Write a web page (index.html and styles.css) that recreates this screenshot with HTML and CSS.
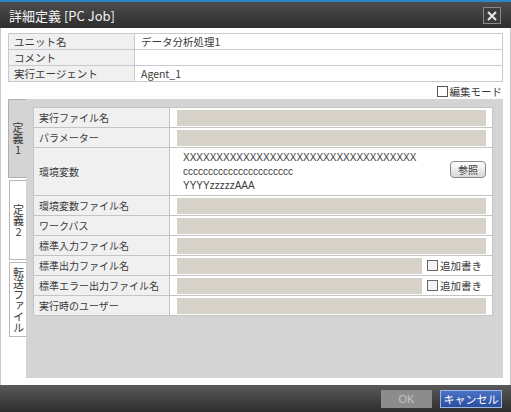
FILE: index.html
```html
<!DOCTYPE html>
<html lang="ja">
<head>
<meta charset="utf-8">
<link rel="stylesheet" href="styles.css">
</head>
<body>
<div class="dialog">
  <div class="titlebar">
    <span class="title">詳細定義 [PC Job]</span>
    <span class="close"><svg width="10" height="10" viewBox="0 0 10 10"><path d="M1 1L9 9M9 1L1 9" stroke="#e8e8e8" stroke-width="2"/></svg></span>
  </div>
  <div class="content">
    <table class="info">
      <tr><td class="lbl">ユニット名</td><td class="val">データ分析処理1</td></tr>
      <tr><td class="lbl">コメント</td><td class="val"></td></tr>
      <tr><td class="lbl">実行エージェント</td><td class="val">Agent_1</td></tr>
    </table>
    <div class="editmode"><span class="cb"></span>編集モード</div>
    <div class="tabarea">
      <div class="tablist">
        <div class="tab tab1 active"><span class="vt">定義1</span></div>
        <div class="tab tab2"><span class="vt">定義2</span></div>
        <div class="tab tab3"><span class="vt">転送ファイル</span></div>
      </div>
      <div class="panel">
        <table class="defs">
          <tr><td class="lbl">実行ファイル名</td><td class="val"><div class="inp"></div></td></tr>
          <tr><td class="lbl">パラメーター</td><td class="val"><div class="inp"></div></td></tr>
          <tr class="env"><td class="lbl">環境変数</td><td class="val">
            <div class="envrow">
              <div class="envtext">XXXXXXXXXXXXXXXXXXXXXXXXXXXXXXXXXXX<br>cccccccccccccccccccccc<br>YYYYzzzzzAAA</div>
              <span class="btn">参照</span>
            </div>
          </td></tr>
          <tr><td class="lbl">環境変数ファイル名</td><td class="val"><div class="inp"></div></td></tr>
          <tr><td class="lbl">ワークパス</td><td class="val"><div class="inp"></div></td></tr>
          <tr><td class="lbl">標準入力ファイル名</td><td class="val"><div class="inp"></div></td></tr>
          <tr><td class="lbl">標準出力ファイル名</td><td class="val"><div class="inprow"><div class="inp short"></div><span class="cb"></span>追加書き</div></td></tr>
          <tr><td class="lbl">標準エラー出力ファイル名</td><td class="val"><div class="inprow"><div class="inp short"></div><span class="cb"></span>追加書き</div></td></tr>
          <tr><td class="lbl">実行時のユーザー</td><td class="val"><div class="inp"></div></td></tr>
        </table>
      </div>
    </div>
  </div>
  <div class="footer">
    <span class="fbtn ok">OK</span>
    <span class="fbtn cancel">キャンセル</span>
  </div>
</div>
</body>
</html>
```

FILE: styles.css
```css
html, body {
  margin: 0;
  padding: 0;
}
body {
  width: 511px;
  height: 412px;
  overflow: hidden;
  font-family: "Noto Sans CJK JP", "Noto Sans", sans-serif;
  font-size: 10px;
  color: #3a3a3a;
  background: #fff;
}
.dialog {
  width: 511px;
  height: 412px;
  display: flex;
  flex-direction: column;
}
.titlebar {
  box-sizing: border-box;
  height: 28px;
  border-top: 2px solid #2a86c8;
  background: linear-gradient(#4d4d4d, #2e2e2e);
  display: flex;
  align-items: center;
  justify-content: space-between;
  padding: 0 10px 0 9px;
}
.title {
  color: #f4f4f4;
  font-size: 13px;
  line-height: 1;
}
.close {
  box-sizing: border-box;
  width: 18px;
  height: 17px;
  border: 1px solid #8a8a8a;
  background: #3c3c3c;
  display: flex;
  align-items: center;
  justify-content: center;
  margin-top: 1px;
}
.content {
  flex: 1;
  box-sizing: border-box;
  border-left: 1px solid #c8c8c8;
  border-right: 1px solid #c8c8c8;
  padding: 5px 7px 7px 7px;
  display: flex;
  flex-direction: column;
}
table {
  border-collapse: collapse;
}
td {
  padding: 0;
}
.info {
  width: 495px;
}
.info td {
  border: 1px solid #c8c8d0;
  height: 15px;
  line-height: 14px;
  font-size: 10.5px;
}
.info .lbl {
  width: 120px;
  padding-left: 5px;
  background: #f0f0f0;
}
.info .val {
  padding-left: 6px;
  background: #fff;
}
.editmode {
  display: flex;
  justify-content: flex-end;
  align-items: center;
  height: 14px;
  margin-top: 2px;
  padding-right: 1px;
  font-size: 10.5px;
}
.cb {
  box-sizing: border-box;
  display: inline-block;
  width: 11px;
  height: 11px;
  border: 1px solid #555;
  background: #fff;
  margin-right: 2px;
}
.tabarea {
  display: flex;
  height: 279px;
  margin-top: 1px;
}
.tablist {
  width: 18px;
  display: flex;
  flex-direction: column;
  gap: 2px;
}
.tab {
  box-sizing: border-box;
  display: flex;
  justify-content: center;
  align-items: center;
  background: #fff;
  border: 1px solid #b8b8b8;
  border-right: none;
  margin-left: 1px;
}
.tab.active {
  background: #d4d4d4;
  border-color: #b0b0b0;
  margin-left: 0;
}
.tab1 { height: 79px; }
.tab2 { height: 80px; }
.tab3 { height: 75px; }
.vt {
  writing-mode: vertical-rl;
  text-orientation: upright;
  font-size: 11px;
  line-height: 1;
}
.panel {
  flex: 1;
  background: #d4d4d4;
  padding: 8px 8px 0 7px;
}
.defs {
  width: 460px;
  background: #fff;
}
.defs td {
  border: 1px solid #c4c4c4;
  height: 19px;
}
.defs .lbl {
  width: 130px;
  padding-left: 5px;
  background: #f0f0f0;
  font-size: 10px;
}
.defs .val {
  padding: 0 6px 0 7px;
  font-size: 10.5px;
}
.inp {
  height: 16px;
  background: #d6d2ca;
}
.inprow {
  display: flex;
  align-items: center;
}
.inp.short {
  width: 245px;
  margin-right: 5px;
}
.inprow .cb {
  border-color: #666;
  background: #f4f4f4;
}
.defs .env td {
  height: 47px;
}
.envrow {
  display: flex;
  align-items: center;
  justify-content: space-between;
  padding-left: 6px;
}
.envtext {
  font-family: "Liberation Sans", sans-serif;
  font-size: 10px;
  line-height: 14px;
}
.btn {
  box-sizing: border-box;
  width: 36px;
  height: 17px;
  border: 1px solid #8a8a8a;
  border-radius: 4px;
  background: linear-gradient(#ffffff, #d8d8d8);
  font-size: 10px;
  display: flex;
  align-items: center;
  justify-content: center;
  margin-top: -4px;
}
.footer {
  height: 27px;
  background: linear-gradient(#5a5a5a, #2e2e2e);
  display: flex;
  align-items: center;
  justify-content: flex-end;
  padding-right: 9px;
  gap: 8px;
}
.fbtn {
  box-sizing: border-box;
  height: 18px;
  display: flex;
  align-items: center;
  justify-content: center;
  font-size: 11px;
}
.ok {
  width: 51px;
  background: #8c8c8c;
  color: #c4c4c4;
  font-family: "Liberation Sans", sans-serif;
}
.cancel {
  width: 62px;
  background: linear-gradient(#4a72c4, #2a4ea0);
  border: 1px solid #9fb4e0;
  color: #fff;
}
```
